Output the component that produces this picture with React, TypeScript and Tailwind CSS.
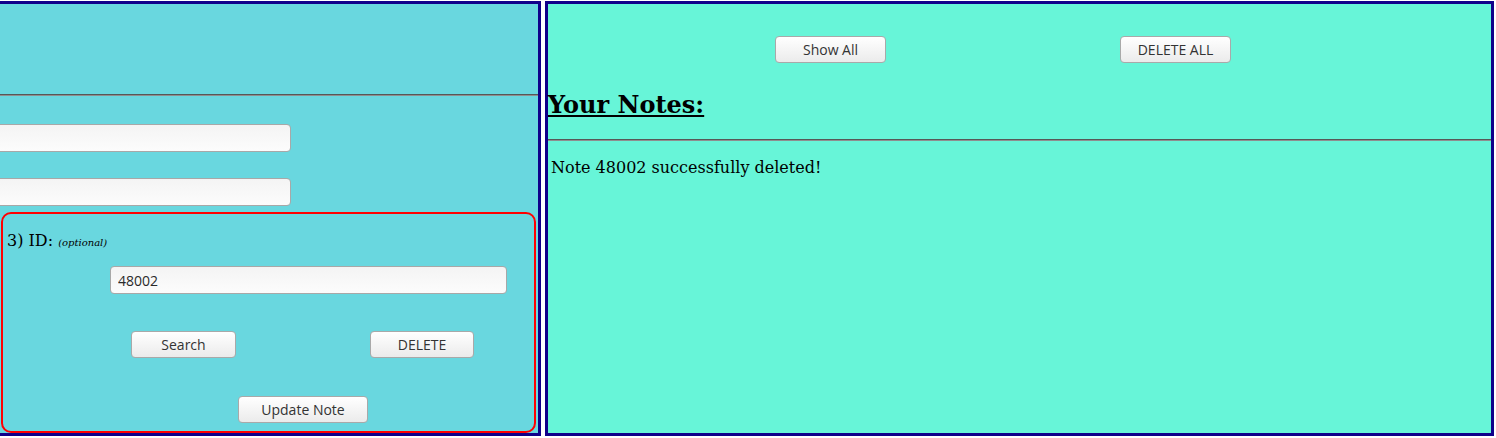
import { FC, ReactNode } from "react";

const serif = "font-['DejaVu_Serif',serif]";

const Btn: FC<{ className?: string; children: ReactNode }> = (props) => {
  return (
    <button
      className={`h-[27px] rounded-[4px] border border-[#a9a9a9] bg-gradient-to-b from-[#ffffff] to-[#ebebeb] text-[14px] text-[#333] font-['Open_Sans',sans-serif] shadow-[inset_0_1px_0_#fff] ${props.className ?? ""}`}
    >
      {props.children}
    </button>
  );
};

const Field: FC<{ className?: string; value?: string }> = (props) => {
  return (
    <input
      readOnly
      value={props.value ?? ""}
      className={`block h-[28px] rounded-[4px] border border-[#a8a8a8] bg-gradient-to-b from-[#f4f4f4] to-[#fcfcfc] px-[7px] text-[14px] text-[#2a2a2a] font-['Open_Sans',sans-serif] outline-none ${props.className ?? ""}`}
    />
  );
};

const Rule: FC<{ className?: string }> = (props) => {
  return (
    <hr
      className={`h-0 m-0 border-0 border-t border-t-[#575757] border-b border-b-[#8e8e8e] ${props.className ?? ""}`}
    />
  );
};

const App: FC = () => {
  return (
    <div className="w-[1496px] h-[438px] overflow-hidden bg-white pt-[1px]">
      <div className="flex h-[435px]">
        {/* left panel, scrolled partly out of view */}
        <div className="-ml-[300px] w-[841px] shrink-0 h-full border-[3px] border-[#10008a] bg-[#69d7df] flex flex-col">
          <div className="h-[90px]" />
          <Rule />
          <Field className="ml-[100px] w-[488px] mt-[28px]" />
          <Field className="ml-[100px] w-[488px] mt-[26px]" />
          <div className="ml-[298px] mr-[2px] mt-[6px] flex-1 border-2 border-[#ff0000] rounded-[10px] flex flex-col">
            <div className={`${serif} text-[16px] text-black mt-[17px] ml-[4px] leading-[20px]`}>
              3) ID: <i className="text-[10px]">(optional)</i>
            </div>
            <Field className="ml-[107px] w-[397px] mt-[13px]" value="48002" />
            <div className="flex mt-[37px]">
              <Btn className="ml-[128px] w-[105px]">Search</Btn>
              <Btn className="ml-[134px] w-[104px]">DELETE</Btn>
            </div>
            <div className="flex mt-[38px]">
              <Btn className="ml-[235px] w-[130px]">Update Note</Btn>
            </div>
          </div>
        </div>

        {/* right panel */}
        <div className="ml-[4px] w-[949px] shrink-0 h-full border-[3px] border-[#10008a] bg-[#67f5d8] flex flex-col">
          <div className="flex mt-[32px]">
            <Btn className="ml-[227px] w-[111px]">Show All</Btn>
            <Btn className="ml-[234px] w-[111px]">DELETE ALL</Btn>
          </div>
          <h2 className={`${serif} font-bold underline text-[24px] leading-[32px] mt-[26px] text-black`}>
            Your Notes:
          </h2>
          <Rule className="mt-[18px]" />
          <p className={`${serif} text-[16px] text-black mt-[17px] ml-[3px] leading-[20px]`}>
            Note 48002 successfully deleted!
          </p>
        </div>
      </div>
    </div>
  );
};

export default App;
